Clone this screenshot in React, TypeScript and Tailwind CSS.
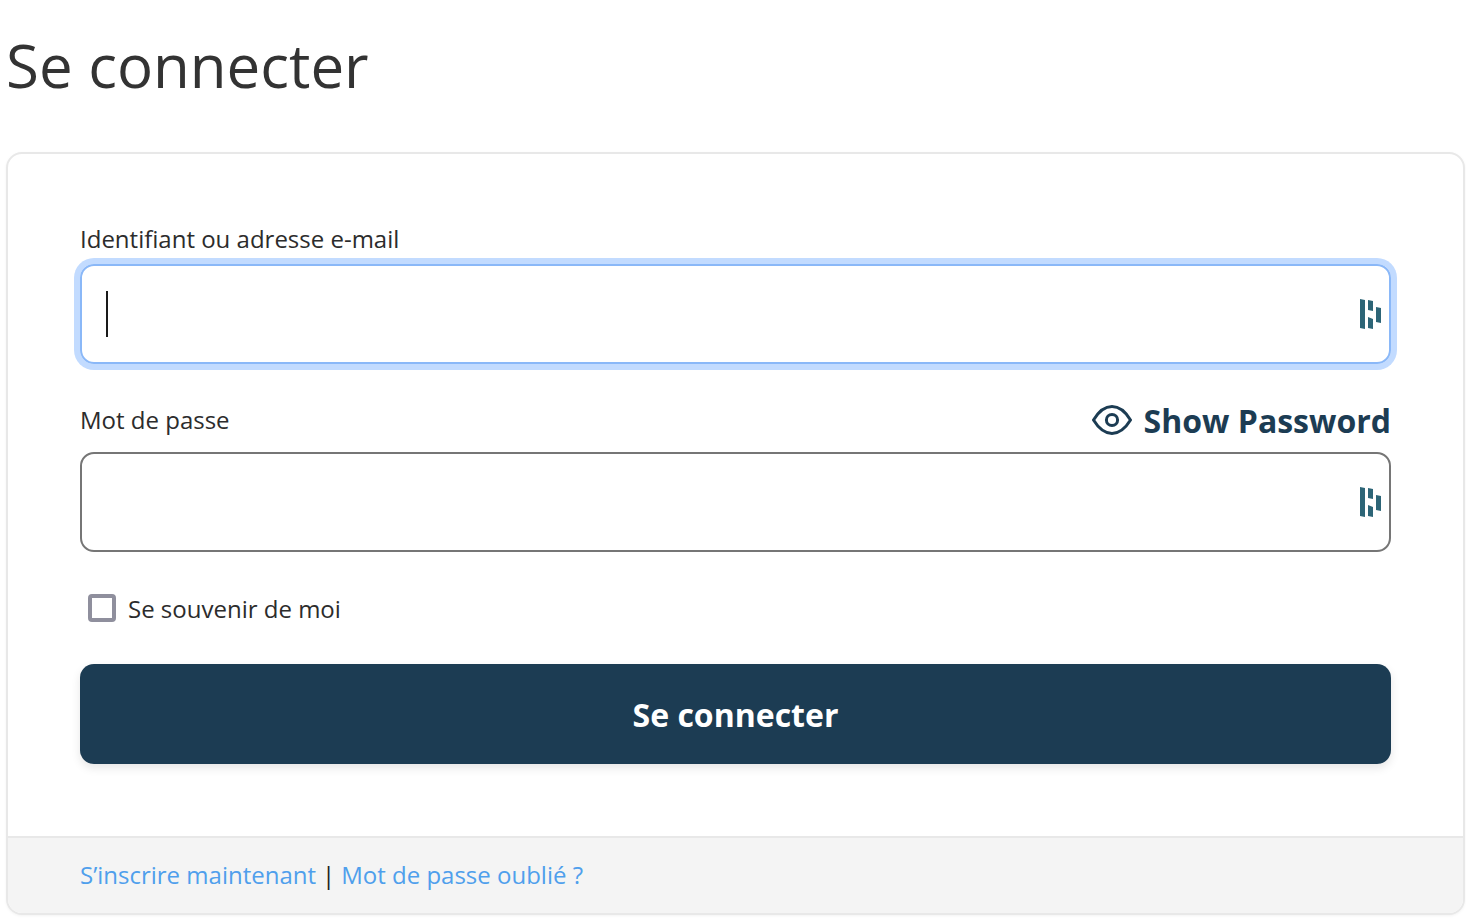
function KeyIcon() {
  return (
    <svg className="absolute right-[7px] top-1/2 h-[30px] w-[22px] -translate-y-1/2" viewBox="0 0 22 30" fill="#2d6577">
      <polygon points="0,0 5,1 5,30 0,29" />
      <polygon points="8,1 13,2 13,12 8,11" />
      <polygon points="8,18 13,20 13,30 8,29" />
      <polygon points="16,8 21,9 21,24 16,23" />
    </svg>
  );
}

function EyeIcon() {
  return (
    <svg className="h-[30px] w-[40px] -translate-y-[1px]" viewBox="0 0 40 30" fill="none" stroke="#1c3c53" strokeWidth="3" strokeLinejoin="round">
      <path d="M1.5 15C7 6 13 1.6 20 1.6S33 6 38.5 15C33 24 27 28.4 20 28.4S7 24 1.5 15Z" />
      <circle cx="20" cy="15" r="5.6" />
    </svg>
  );
}

export default function App() {
  return (
    <div className="min-h-[922px] bg-white pl-[6px] pr-[1px] font-['Open_Sans',sans-serif] text-[#333]">
      <h1 className="h-[152px] pt-[23px] text-[60px] leading-[84px] font-normal text-[#333]">Se connecter</h1>

      <div className="w-[1459px] overflow-hidden rounded-2xl border-2 border-[#e8e8e8] bg-white shadow-[0_1px_3px_rgba(0,0,0,0.05)]">
        <form className="h-[682px] px-[72px] pt-[67px]">
          <label className="block h-[43px] text-[24px] leading-[36px] text-[#2c2c2c]">Identifiant ou adresse e-mail</label>
          <div className="relative h-[100px] rounded-[14px] border-2 border-[#8ab8f8] shadow-[0_0_0_6px_#c2dbff]">
            <span className="absolute left-[24px] top-[25px] h-[46px] w-[2px] bg-[#1a1a1a]" />
            <KeyIcon />
          </div>

          <div className="mt-[36px] flex h-[52px] items-start justify-between">
            <label className="text-[24px] leading-[40px] text-[#2c2c2c]">Mot de passe</label>
            <button type="button" className="flex items-center gap-[12px] text-[32px] leading-[42px] font-bold text-[#1c3c53]">
              <EyeIcon />
              Show Password
            </button>
          </div>
          <div className="relative h-[100px] rounded-[14px] border-2 border-[#767676]">
            <KeyIcon />
          </div>

          <label className="mt-[42px] ml-[8px] flex h-[28px] items-center gap-[12px] text-[24px] text-[#2c2c2c]">
            <span className="h-[28px] w-[28px] rounded-[4px] border-[4px] border-[#8f8f9d] bg-white" />
            <span className="translate-y-[1px]">Se souvenir de moi</span>
          </label>

          <button type="button" className="mt-[42px] h-[100px] w-full rounded-[14px] bg-[#1c3c53] pt-[2px] text-[32px] font-bold text-white shadow-[0_4px_10px_rgba(0,0,0,0.1)]">
            Se connecter
          </button>
        </form>

        <div className="flex h-[77px] items-center gap-[6px] border-t-2 border-[#e8e8e8] bg-[#f4f4f4] pb-[2px] pl-[72px] text-[24px]">
          <a className="text-[#4f9fec]">S’inscrire maintenant</a>
          <span className="text-[#222]">|</span>
          <a className="text-[#4f9fec]">Mot de passe oublié ?</a>
        </div>
      </div>
    </div>
  );
}
